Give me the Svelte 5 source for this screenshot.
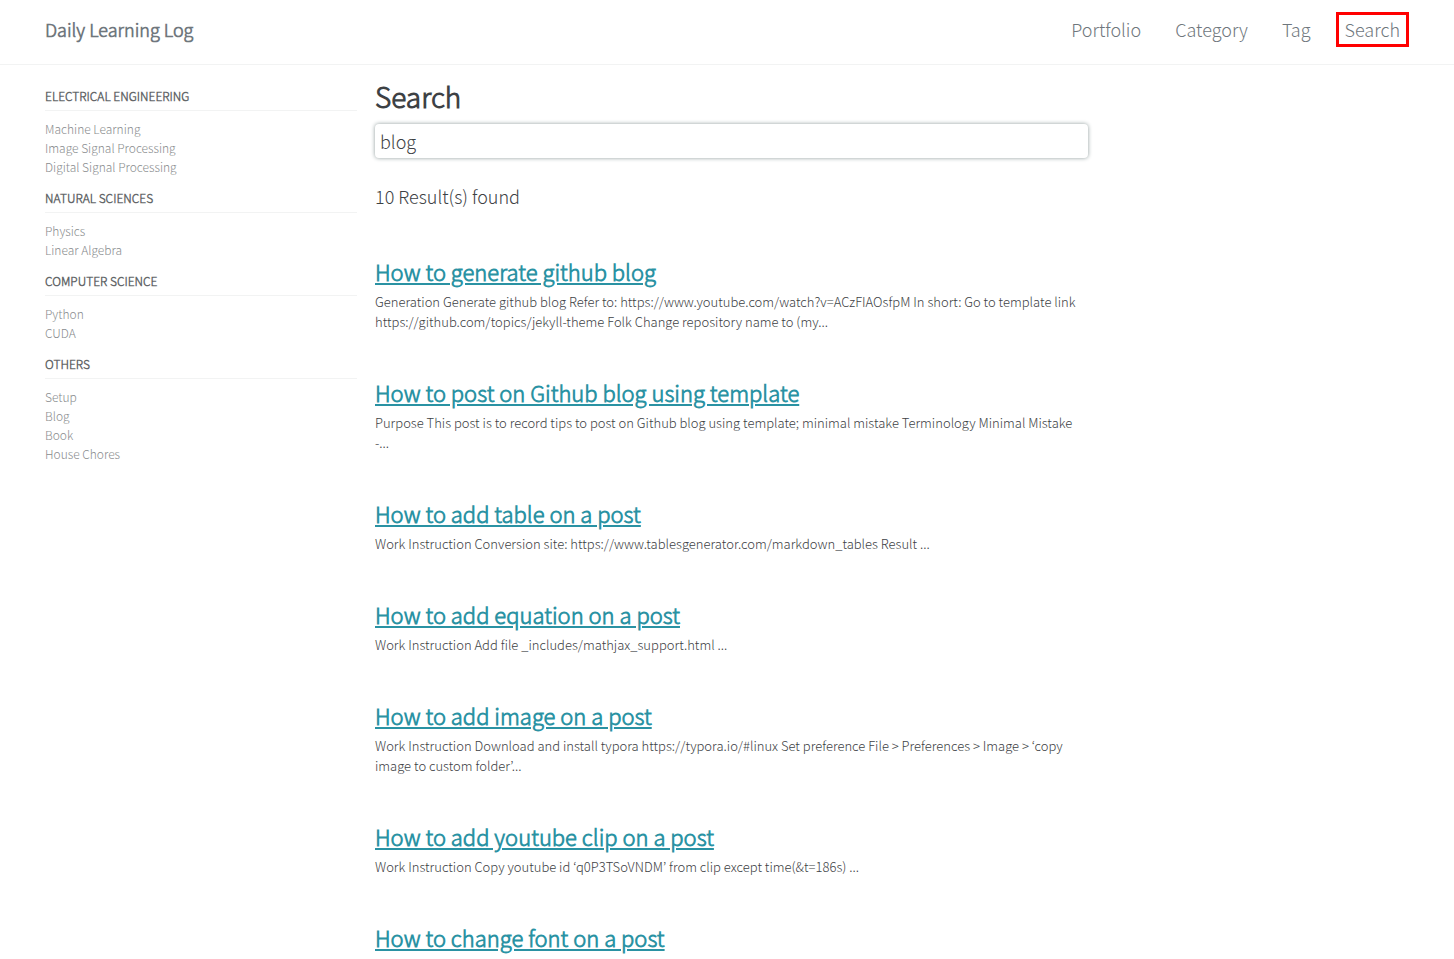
<script>
  const nav = ['Portfolio', 'Category', 'Tag', 'Search'];
  const groups = [
    { title: 'Electrical Engineering', items: ['Machine Learning', 'Image Signal Processing', 'Digital Signal Processing'] },
    { title: 'Natural Sciences', items: ['Physics', 'Linear Algebra'] },
    { title: 'Computer Science', items: ['Python', 'CUDA'] },
    { title: 'Others', items: ['Setup', 'Blog', 'Book', 'House Chores'] }
  ];
  const results = [
    { title: 'How to generate github blog', text: 'Generation Generate github blog Refer to: https://www.youtube.com/watch?v=ACzFIAOsfpM In short: Go to template link https://github.com/topics/jekyll-theme Folk Change repository name to (my...' },
    { title: 'How to post on Github blog using template', text: 'Purpose This post is to record tips to post on Github blog using template; minimal mistake Terminology Minimal Mistake -...' },
    { title: 'How to add table on a post', text: 'Work Instruction Conversion site: https://www.tablesgenerator.com/markdown_tables Result ...' },
    { title: 'How to add equation on a post', text: 'Work Instruction Add file _includes/mathjax_support.html ...' },
    { title: 'How to add image on a post', text: 'Work Instruction Download and install typora https://typora.io/#linux Set preference File > Preferences > Image > ‘copy image to custom folder’...' },
    { title: 'How to add youtube clip on a post', text: 'Work Instruction Copy youtube id ‘q0P3TSoVNDM’ from clip except time(&t=186s) ...' },
    { title: 'How to change font on a post', text: '' }
  ];
  let query = $state('blog');
</script>

<div class="page">
  <header>
    <a class="brand" href="#home">Daily Learning Log</a>
    <nav>
      {#each nav as item}
        <a href="#{item}" class:marked={item === 'Search'}>{item}</a>
      {/each}
    </nav>
  </header>
  <div class="body">
    <aside>
      {#each groups as g}
        <h2>{g.title}</h2>
        <ul>
          {#each g.items as item}
            <li><a href="#{item}">{item}</a></li>
          {/each}
        </ul>
      {/each}
    </aside>
    <main>
      <h1>Search</h1>
      <input type="text" aria-label="Search" bind:value={query} />
      <p class="count">10 Result(s) found</p>
      {#each results as r}
        <article>
          <h3><a href="#{r.title}">{r.title}</a></h3>
          <p>{r.text}</p>
        </article>
      {/each}
    </main>
  </div>
</div>

<style>
  :global(body) {
    margin: 0;
    background: #fff;
  }
  .page {
    height: 100vh;
    overflow: hidden;
    font-family: 'Noto Sans CJK KR', 'Noto Sans CJK SC', sans-serif;
    font-weight: 300;
    color: #3d4144;
  }
  a {
    color: #6f777d;
    text-decoration: none;
  }
  .brand,
  h1,
  h2,
  h3 {
    font-family: 'Noto Sans CJK KR Light', 'Noto Sans CJK KR', sans-serif;
    font-weight: 700;
  }
  header {
    display: flex;
    justify-content: space-between;
    align-items: center;
    padding: 12px 54px 18px 45px;
    border-bottom: 1px solid #f2f3f3;
    font-size: 18px;
    line-height: 34px;
  }
  nav {
    display: flex;
    gap: 34px;
  }
  .marked {
    position: relative;
  }
  .marked::after {
    content: '';
    position: absolute;
    inset: 0 -9px -1px;
    border: 3px solid #f00;
  }
  .body {
    display: grid;
    grid-template-columns: 312px minmax(0, 713px);
    gap: 18px;
    padding: 0 45px;
  }
  aside {
    padding-top: 21px;
    font-size: 12px;
  }
  aside a {
    color: #898c8e;
  }
  h2 {
    margin: 0 0 8px;
    padding-bottom: 5px;
    border-bottom: 1px solid #f2f3f3;
    color: #646769;
    font-size: 12px;
    line-height: 19px;
    text-transform: uppercase;
  }
  ul {
    margin: 0 0 12px;
    padding: 0;
    list-style: none;
    line-height: 19px;
  }
  h1 {
    margin: 11px 0 8px;
    font-size: 28px;
    line-height: 40px;
  }
  input {
    display: block;
    width: 100%;
    height: 34px;
    box-sizing: border-box;
    color: inherit;
    font: inherit;
    font-size: 18px;
    padding: 0 5px;
    border: 0;
    border-radius: 4px;
    outline: 0;
    box-shadow: 0 0 4px #8f9c9c;
  }
  .count {
    margin: 22px 0 39px;
    font-size: 18px;
    line-height: 32px;
  }
  article {
    margin-bottom: 40px;
  }
  h3 {
    margin: 0;
    font-size: 22px;
    line-height: 40px;
  }
  h3 a {
    color: #2a92a3;
    text-decoration: underline;
  }
  article p {
    margin: 1px 0 0;
    font-size: 13px;
    line-height: 20px;
  }
</style>
